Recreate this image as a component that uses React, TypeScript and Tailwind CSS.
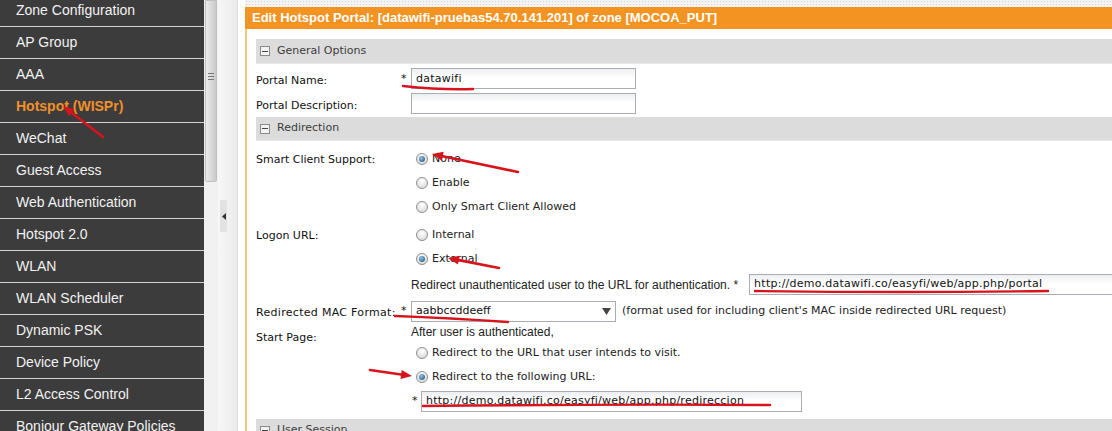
import React from 'react';

const menu = [
  'Zone Configuration',
  'AP Group',
  'AAA',
  'Hotspot (WISPr)',
  'WeChat',
  'Guest Access',
  'Web Authentication',
  'Hotspot 2.0',
  'WLAN',
  'WLAN Scheduler',
  'Dynamic PSK',
  'Device Policy',
  'L2 Access Control',
  'Bonjour Gateway Policies',
];

const Radio = ({ checked }: { checked?: boolean }) => (
  <span className="inline-flex w-[12px] h-[12px] shrink-0 rounded-full border border-[#8e8e8e] bg-[radial-gradient(circle_at_50%_30%,#ffffff,#d4d4d4)] items-center justify-center">
    {checked && (
      <span className="w-[6px] h-[6px] rounded-full bg-[radial-gradient(circle_at_40%_35%,#8cc3e6,#174a73)]" />
    )}
  </span>
);

const RadioRow = ({ label, checked }: { label: string; checked?: boolean }) => (
  <div className="h-[24px] flex items-center gap-[4px] pl-[5px] text-[#222]">
    <Radio checked={checked} />
    <span>{label}</span>
  </div>
);

const Section = ({ title, h }: { title: string; h: string }) => (
  <div className={`${h} bg-[#dcdcdc] border-b border-[#e8e8e8] flex items-center pl-[4px] gap-[7px] text-[#3c3c3c]`}>
    <span className="w-[10px] h-[10px] border border-[#8a8a8a] bg-[#f2f2f2] flex items-center justify-center">
      <span className="w-[6px] h-px bg-[#444]" />
    </span>
    <span>{title}</span>
  </div>
);

const Input = ({ value, w }: { value?: string; w: string }) => (
  <div className={`${w} h-[21px] shrink-0 border border-[#a9aeb5] bg-linear-to-b from-[#eceef1] to-white to-[45%] flex items-center pl-[4px] text-[#111] tracking-[0.25px] whitespace-nowrap overflow-hidden`}>
    {value}
  </div>
);

function Arrow({ x1, y1, x2, y2 }: { x1: number; y1: number; x2: number; y2: number }) {
  const a = Math.atan2(y2 - y1, x2 - x1);
  const L = 11;
  const W = 4.5;
  const bx = x2 - L * Math.cos(a);
  const by = y2 - L * Math.sin(a);
  const px = -Math.sin(a) * W;
  const py = Math.cos(a) * W;
  return (
    <g>
      <line x1={x1} y1={y1} x2={bx} y2={by} stroke="#d7141c" strokeWidth={2.6} strokeLinecap="round" />
      <polygon points={`${x2},${y2} ${bx + px},${by + py} ${bx - px},${by - py}`} fill="#d7141c" />
    </g>
  );
}

export default function App() {
  return (
    <div className="relative w-[1112px] h-[431px] overflow-hidden bg-white flex font-['DejaVu_Sans',sans-serif] text-[11px]">
      {/* Sidebar menu */}
      <aside className="w-[204px] shrink-0 bg-[#3c3c3c] overflow-hidden">
        <div className="mt-[-5px] font-['Liberation_Sans',Arial,sans-serif] text-[14px]">
          {menu.map(item => (
            <div
              key={item}
              className={`h-[32px] border-b border-[#d2d2d2] flex items-center pl-[16px] whitespace-nowrap ${
                item === 'Hotspot (WISPr)' ? 'text-[#f0902a] font-bold' : 'text-[#f2f2f2]'
              }`}
            >
              {item}
            </div>
          ))}
        </div>
      </aside>

      {/* Sidebar scrollbar */}
      <div className="w-[14px] shrink-0 bg-[#f1f1f1] flex flex-col">
        <div className="h-[182px] mx-[1px] bg-linear-to-r from-[#ececec] to-[#c9c9c9] border border-[#c0c0c0] rounded-b-[2px] flex flex-col items-center pt-[72px]">
          <span className="w-[6px] h-px bg-[#777] mb-[2px]" />
          <span className="w-[6px] h-px bg-[#777] mb-[2px]" />
          <span className="w-[6px] h-px bg-[#777]" />
        </div>
      </div>

      {/* Splitter */}
      <div className="w-[20px] shrink-0 bg-linear-to-r from-[#f7f7f7] to-[#ebebeb] border-r border-[#dedede] flex flex-col">
        <div className="mt-[200px] ml-[2px] w-[7px] h-[32px] bg-[#e2e2e2] flex items-center justify-center">
          <svg width="4" height="7" viewBox="0 0 4 7">
            <path d="M4 0 L0 3.5 L4 7 Z" fill="#333" />
          </svg>
        </div>
      </div>

      {/* Main */}
      <main className="flex-1 min-w-0 pl-[7px] flex flex-col">
        <div className="h-[7px] shrink-0 bg-[#f3f3f3] bg-[radial-gradient(#d6d6d6_0.8px,transparent_0.8px)] bg-size-[3px_3px]" />
        <div className="h-[22px] shrink-0 bg-[#f39322] text-white font-bold font-['Liberation_Sans',Arial,sans-serif] text-[13px] flex items-center pl-[7px] whitespace-nowrap">
          Edit Hotspot Portal: [datawifi-pruebas54.70.141.201] of zone [MOCOA_PUT]
        </div>
        <div className="flex-1 border-l-2 border-[#f6c67f] pl-[9px] pt-[10px] flex flex-col">
          <Section title="General Options" h="h-[25px]" />
          <div className="pt-[4px] flex flex-col gap-[3px]">
            <div className="flex items-center">
              <span className="w-[145px] shrink-0 mt-[5px] text-[#111]">Portal Name:</span>
              <span className="w-[10px] shrink-0 text-[#111]">*</span>
              <Input w="w-[225px]" value="datawifi" />
            </div>
            <div className="flex items-center">
              <span className="w-[155px] shrink-0 mt-[5px] text-[#111]">Portal Description:</span>
              <Input w="w-[225px]" />
            </div>
          </div>

          <div className="mt-[3px]">
            <Section title="Redirection" h="h-[24px]" />
          </div>

          <div className="pt-[6px] flex">
            <div className="w-[155px] shrink-0 h-[24px] pt-[2px] flex items-center text-[#111]">Smart Client Support:</div>
            <div className="flex flex-col">
              <RadioRow label="None" checked />
              <RadioRow label="Enable" />
              <RadioRow label="Only Smart Client Allowed" />
            </div>
          </div>

          <div className="mt-[4px] flex">
            <div className="w-[155px] shrink-0 h-[24px] pt-[2px] flex items-center text-[#111]">Logon URL:</div>
            <div className="flex flex-col">
              <RadioRow label="Internal" />
              <RadioRow label="External" checked />
              <div className="mt-[3px] h-[21px] flex items-center whitespace-nowrap">
                <span className="font-['Liberation_Sans',Arial,sans-serif] text-[12px] text-[#222]">
                  Redirect unauthenticated user to the URL for authentication. *
                </span>
                <div className="ml-[11px]">
                  <Input w="w-[400px]" value="http://demo.datawifi.co/easyfi/web/app.php/portal" />
                </div>
              </div>
            </div>
          </div>

          <div className="mt-[6px] flex items-center">
            <span className="w-[145px] shrink-0 mt-[3px] text-[#111] tracking-[0.3px]">Redirected MAC Format:</span>
            <span className="w-[10px] shrink-0 text-[#111]">*</span>
            <div className="w-[205px] h-[21px] shrink-0 border border-[#a9aeb5] bg-white flex items-center justify-between pl-[4px] pr-[4px] text-[#111]">
              <span>aabbccddeeff</span>
              <svg width="9" height="7" viewBox="0 0 9 7">
                <path d="M0 0 H9 L4.5 7 Z" fill="#444" />
              </svg>
            </div>
            <span className="ml-[6px] text-[#222] whitespace-nowrap">
              (format used for including client's MAC inside redirected URL request)
            </span>
          </div>

          <div className="mt-[1px] flex">
            <div className="w-[155px] shrink-0 pt-[8px] leading-[13px] text-[#111]">Start Page:</div>
            <div className="flex flex-col">
              <div className="h-[18px] flex items-center font-['Liberation_Sans',Arial,sans-serif] text-[12px] text-[#222]">
                After user is authenticated,
              </div>
              <RadioRow label="Redirect to the URL that user intends to visit." />
              <RadioRow label="Redirect to the following URL:" checked />
              <div className="mt-[2px] flex items-center">
                <span className="w-[10px] pl-[1px] text-[#111]">*</span>
                <Input w="w-[381px]" value="http://demo.datawifi.co/easyfi/web/app.php/redireccion" />
              </div>
            </div>
          </div>

          <div className="mt-[7px]">
            <Section title="User Session" h="h-[24px]" />
          </div>
        </div>
      </main>

      {/* Red annotations drawn over the screenshot */}
      <svg className="absolute inset-0 pointer-events-none" width="1112" height="431" viewBox="0 0 1112 431">
        <Arrow x1={103} y1={137} x2={63} y2={106} />
        <path d="M403 86 Q440 90 473 89" stroke="#d7141c" strokeWidth={2.4} fill="none" strokeLinecap="round" />
        <Arrow x1={518} y1={172} x2={432} y2={154} />
        <Arrow x1={499} y1={268} x2={448} y2={258} />
        <path d="M755 291 Q900 293 1048 291" stroke="#d7141c" strokeWidth={2.4} fill="none" strokeLinecap="round" />
        <path d="M395 316 Q450 318 508 322" stroke="#d7141c" strokeWidth={2.4} fill="none" strokeLinecap="round" />
        <Arrow x1={370} y1={370} x2={412} y2={376} />
        <path d="M423 406 Q600 404 770 405" stroke="#d7141c" strokeWidth={2.4} fill="none" strokeLinecap="round" />
      </svg>
    </div>
  );
}
